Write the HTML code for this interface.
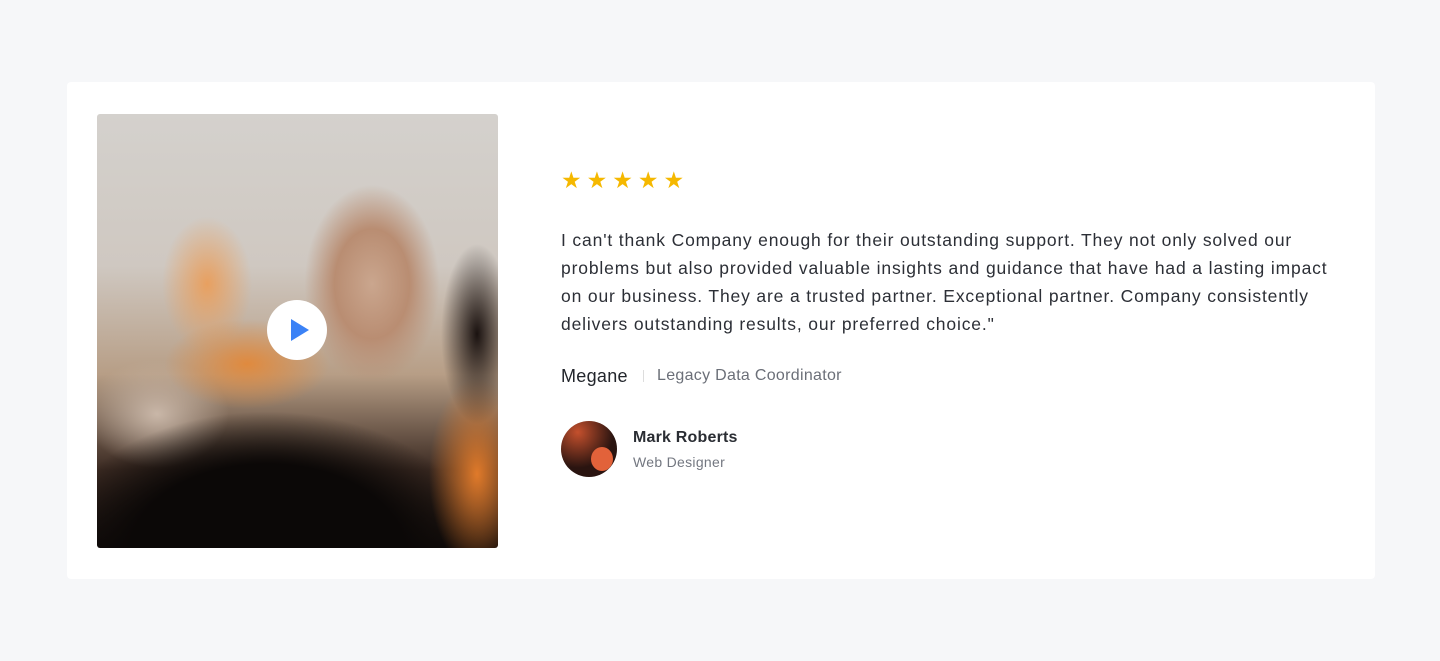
<!DOCTYPE html>
<html><head><meta charset="utf-8"><style>
*{margin:0;padding:0;box-sizing:border-box}
body{width:1440px;height:661px;background:#f6f7f9;font-family:"Liberation Sans",sans-serif;position:relative;overflow:hidden}
.card{position:absolute;left:67px;top:82px;width:1308px;height:497px;background:#fff;border-radius:4px}
.img{position:absolute;left:97px;top:114px;width:401px;height:434px;border-radius:3px;overflow:hidden;
background:
radial-gradient(ellipse 75px 110px at 275px 170px,#caa68e,#b98d72 50%,transparent 90%),
radial-gradient(ellipse 40px 100px at 380px 220px,#1a1210,transparent 90%),
radial-gradient(ellipse 60px 120px at 380px 360px,#e07a2a,transparent 80%),
radial-gradient(ellipse 110px 60px at 150px 250px,#e08a3e,transparent 75%),
radial-gradient(ellipse 60px 90px at 110px 170px,#e8a060,transparent 75%),
radial-gradient(ellipse 230px 150px at 170px 440px,#0b0807,#0b0807 60%,transparent 95%),
radial-gradient(ellipse 80px 60px at 60px 300px,#c9b7a8,transparent 90%),
linear-gradient(180deg,#d4d1cd 0%,#cfc8c1 35%,#b79e86 60%,#3b2a22 82%,#120c0a 100%);}
.play{position:absolute;left:267px;top:300px;width:60px;height:60px;border-radius:50%;background:#fff}
.play:after{content:"";position:absolute;left:24px;top:19px;border-left:18px solid #3b82f6;border-top:11px solid transparent;border-bottom:11px solid transparent}
.stars{position:absolute;left:561px;top:167px;color:#f5b800;font-size:23px;letter-spacing:5px}
.q{position:absolute;left:561px;top:226px;width:772px;font-size:17.5px;line-height:28px;color:#2c2f36;letter-spacing:0.85px}
.name{position:absolute;left:561px;top:366px;font-size:18px;color:#22252b;letter-spacing:0.3px}
.sep{position:absolute;left:643px;top:370px;width:1px;height:12px;background:#ddd}
.role{position:absolute;left:657px;top:367px;font-size:16px;color:#6b6f78;letter-spacing:0.3px}
.av{position:absolute;left:561px;top:421px;width:56px;height:56px;border-radius:50%;background:radial-gradient(circle at 30% 20%,#c4502d,#2a1410 60%),#333;overflow:hidden}
.av:after{content:"";position:absolute;left:30px;top:26px;width:22px;height:24px;border-radius:50%;background:#e2623a}
.mn{position:absolute;left:633px;top:429px;font-size:16px;font-weight:bold;color:#2a2d33;letter-spacing:0.2px}
.md{position:absolute;left:633px;top:454px;font-size:14px;color:#737780;letter-spacing:0.3px}
</style></head><body>
<div class="card"></div>
<div class="img"></div>
<div class="play"></div>
<div class="stars">★★★★★</div>
<div class="q">I can't thank Company enough for their outstanding support. They not only solved our problems but also provided valuable insights and guidance that have had a lasting impact on our business. They are a trusted partner. Exceptional partner. Company consistently delivers outstanding results, our preferred choice."</div>
<div class="name">Megane</div><div class="sep"></div><div class="role">Legacy Data Coordinator</div>
<div class="av"></div>
<div class="mn">Mark Roberts</div>
<div class="md">Web Designer</div>
</body></html>
